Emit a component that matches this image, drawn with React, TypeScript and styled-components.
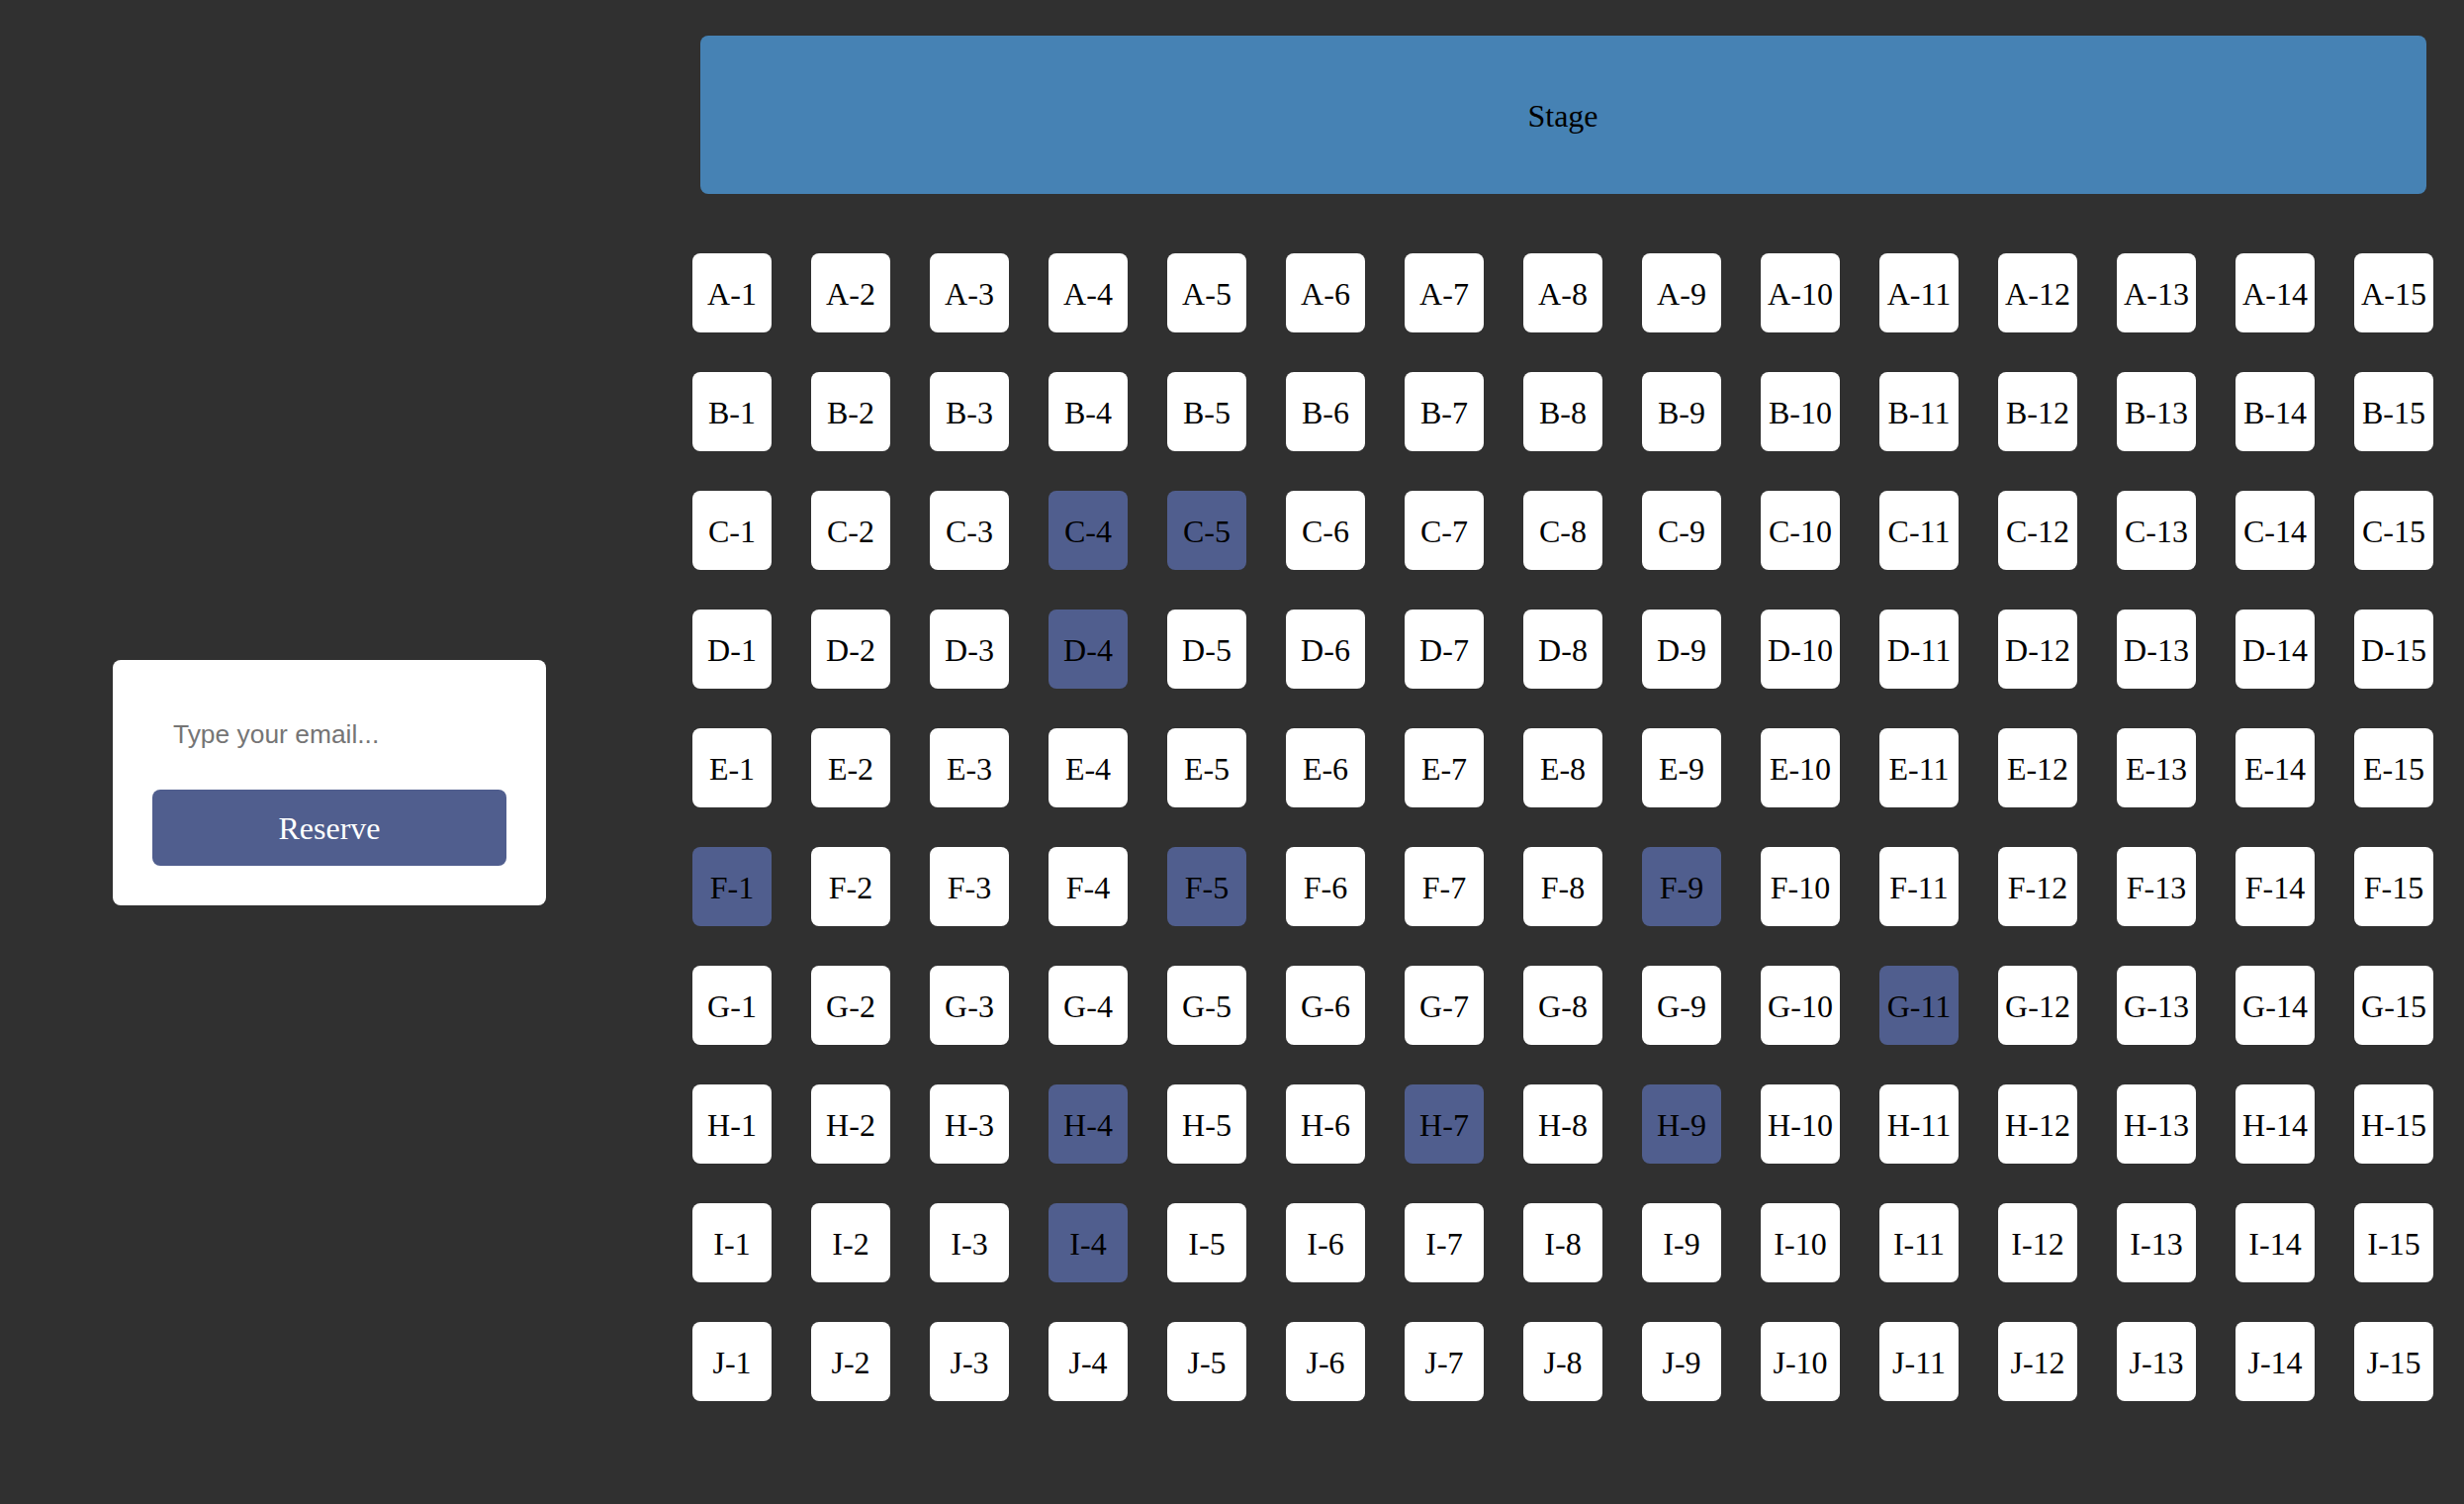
import React from "react";
import styled, { createGlobalStyle } from "styled-components";

const GlobalStyle = createGlobalStyle`
  html, body {
    margin: 0;
    padding: 0;
    background: #303030;
  }
  body {
    font-family: "Liberation Serif", "Times New Roman", serif;
  }
`;

const Page = styled.div`
  display: flex;
  align-items: flex-start;
  min-height: 1520px;
  background: #303030;
`;

const Sidebar = styled.aside`
  width: 680px;
  flex-shrink: 0;
  padding: 667px 0 0 114px;
  box-sizing: border-box;
`;

const Card = styled.form`
  width: 438px;
  box-sizing: border-box;
  padding: 40px;
  background: #ffffff;
  border-radius: 8px;
  display: flex;
  flex-direction: column;
`;

const EmailInput = styled.input`
  height: 70px;
  margin-bottom: 21px;
  padding: 0 21px;
  border: none;
  outline: none;
  background: transparent;
  font-family: "Liberation Sans", Arial, sans-serif;
  font-size: 26.4px;
  color: #333;
  &::placeholder {
    color: #757575;
  }
`;

const ReserveButton = styled.button`
  height: 77px;
  border: none;
  border-radius: 8px;
  background: #505e8e;
  color: #ffffff;
  font-family: "Liberation Serif", "Times New Roman", serif;
  font-size: 32px;
  padding-top: 2px;
  cursor: pointer;
`;

const Hall = styled.main`
  padding-top: 36px;
  width: 1760px;
  margin-left: 20px;
  display: flex;
  flex-direction: column;
  align-items: center;
`;

const Stage = styled.div`
  width: 1745px;
  height: 160px;
  box-sizing: border-box;
  padding-top: 2px;
  background: #4682b4;
  border-radius: 8px;
  display: flex;
  align-items: center;
  justify-content: center;
  font-size: 32px;
  color: #000;
  margin-bottom: 60px;
`;

const SeatGrid = styled.div`
  display: grid;
  grid-template-columns: repeat(15, 80px);
  grid-auto-rows: 80px;
  gap: 40px;
`;

const Seat = styled.div<{ $taken: boolean }>`
  display: flex;
  align-items: center;
  justify-content: center;
  box-sizing: border-box;
  padding-top: 2px;
  border-radius: 8px;
  background: ${(p) => (p.$taken ? "#505e8e" : "#ffffff")};
  color: #000;
  font-size: 32px;
  user-select: none;
`;

const rows = ["A", "B", "C", "D", "E", "F", "G", "H", "I", "J"];
const taken = new Set([
  "C-4",
  "C-5",
  "D-4",
  "F-1",
  "F-5",
  "F-9",
  "G-11",
  "H-4",
  "H-7",
  "H-9",
  "I-4",
]);

export default function App() {
  const seats: string[] = [];
  rows.forEach((r) => {
    for (let i = 1; i <= 15; i++) seats.push(`${r}-${i}`);
  });
  return (
    <>
      <GlobalStyle />
      <Page>
        <Sidebar>
          <Card onSubmit={(e) => e.preventDefault()}>
            <EmailInput type="email" placeholder="Type your email..." />
            <ReserveButton type="submit">Reserve</ReserveButton>
          </Card>
        </Sidebar>
        <Hall>
          <Stage>Stage</Stage>
          <SeatGrid>
            {seats.map((s) => (
              <Seat key={s} $taken={taken.has(s)}>
                {s}
              </Seat>
            ))}
          </SeatGrid>
        </Hall>
      </Page>
    </>
  );
}
